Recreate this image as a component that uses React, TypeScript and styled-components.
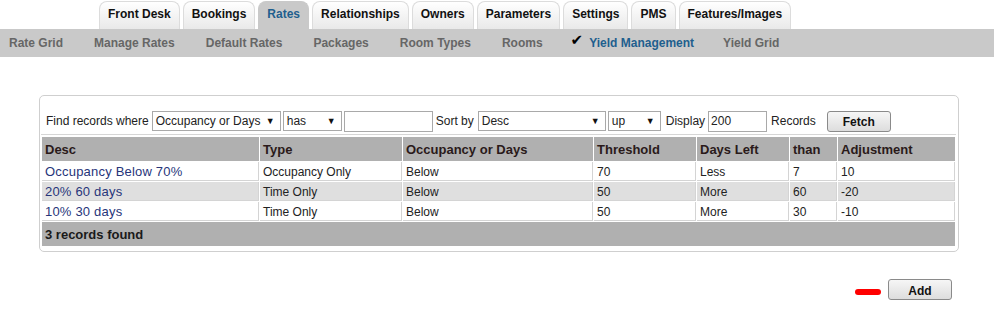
import styled, {createGlobalStyle} from "styled-components";

const GlobalStyle = createGlobalStyle`
    body {
        margin: 0;
        background: #ffffff;
        font-family: "Liberation Sans", Arial, sans-serif;
        color: #222;
    }
`;

type Row = {
    desc: string
    type: string
    occ: string
    threshold: string
    daysLeft: string
    than: string
    adjustment: string
}

const tabs = ["Front Desk", "Bookings", "Rates", "Relationships", "Owners", "Parameters", "Settings", "PMS", "Features/Images"];
const subLinks = ["Rate Grid", "Manage Rates", "Default Rates", "Packages", "Room Types", "Rooms", "Yield Management", "Yield Grid"];

const rows: Row[] = [
    {desc: "Occupancy Below 70%", type: "Occupancy Only", occ: "Below", threshold: "70", daysLeft: "Less", than: "7", adjustment: "10"},
    {desc: "20% 60 days", type: "Time Only", occ: "Below", threshold: "50", daysLeft: "More", than: "60", adjustment: "-20"},
    {desc: "10% 30 days", type: "Time Only", occ: "Below", threshold: "50", daysLeft: "More", than: "30", adjustment: "-10"},
];

const columns = [
    {label: "Desc", width: 217},
    {label: "Type", width: 142},
    {label: "Occupancy or Days", width: 190},
    {label: "Threshold", width: 102},
    {label: "Days Left", width: 92},
    {label: "than", width: 47},
    {label: "Adjustment", width: 117},
];

function App() {
    return (
        <>
            <GlobalStyle/>
            <TabBar>
                {tabs.map(t => (
                    <Tab key={t} $active={t === "Rates"}>{t}</Tab>
                ))}
            </TabBar>
            <SubNav>
                {subLinks.map(s => (
                    <SubLink key={s} $active={s === "Yield Management"}>
                        {s === "Yield Management" && <Check>✔</Check>}
                        {s}
                    </SubLink>
                ))}
            </SubNav>

            <Panel>
                <FilterRow>
                    <Label>Find records where</Label>
                    <FakeSelect $width={129}>Occupancy or Days<Arrow>▼</Arrow></FakeSelect>
                    <FakeSelect $width={59}>has<Arrow>▼</Arrow></FakeSelect>
                    <TextBox $width={89}/>
                    <Label $ml={1} $mr={2}>Sort by</Label>
                    <FakeSelect $width={128}>Desc<Arrow>▼</Arrow></FakeSelect>
                    <FakeSelect $width={53}>up<Arrow>▼</Arrow></FakeSelect>
                    <Label $ml={3}>Display</Label>
                    <TextBox $width={59} defaultValue="200"/>
                    <Label $ml={2}>Records</Label>
                    <Button $ml={8}>Fetch</Button>
                </FilterRow>

                <Table>
                    <colgroup>
                        {columns.map(c => <col key={c.label} style={{width: c.width}}/>)}
                    </colgroup>
                    <thead>
                    <tr>
                        {columns.map(c => <Th key={c.label}>{c.label}</Th>)}
                    </tr>
                    </thead>
                    <tbody>
                    {rows.map((r, i) => (
                        <Tr key={r.desc} $alt={i % 2 === 1}>
                            <DescTd>{r.desc}</DescTd>
                            <Td>{r.type}</Td>
                            <Td>{r.occ}</Td>
                            <Td>{r.threshold}</Td>
                            <Td>{r.daysLeft}</Td>
                            <Td>{r.than}</Td>
                            <Td>{r.adjustment}</Td>
                        </Tr>
                    ))}
                    <tr>
                        <Footer colSpan={7}>3 records found</Footer>
                    </tr>
                    </tbody>
                </Table>
            </Panel>

            <Actions>
                <Marker/>
                <Button>Add</Button>
            </Actions>
        </>
    );
}

export default App;

const TabBar = styled.div`
    display: flex;
    align-items: flex-end;
    gap: 3px;
    height: 29px;
    padding-left: 99px;
`;

const Tab = styled.div<{ $active?: boolean }>`
    height: 28px;
    line-height: 24px;
    padding: 0 8px;
    box-sizing: border-box;
    font-size: 12px;
    font-weight: bold;
    color: ${p => p.$active ? "#1f5f8e" : "#111"};
    border: 1px solid ${p => p.$active ? "#c9c9c9" : "#dcdcdc"};
    border-bottom: none;
    border-radius: 8px 8px 0 0;
    background: ${p => p.$active ? "#c9c9c9" : "linear-gradient(#ffffff, #e9e9e9)"};
`;

const SubNav = styled.div`
    display: flex;
    align-items: center;
    gap: 31px;
    height: 28px;
    padding-left: 9px;
    background: #c9c9c9;
`;

const SubLink = styled.div<{ $active?: boolean }>`
    font-size: 12px;
    font-weight: bold;
    color: ${p => p.$active ? "#1f5f8e" : "#666"};
    display: flex;
    align-items: center;
    margin-left: ${p => p.$active ? -3 : 0}px;
    margin-right: ${p => p.$active ? -2 : 0}px;
`;

const Check = styled.span`
    color: #000;
    font-size: 15px;
    margin-right: 6px;
    margin-top: -6px;
    font-family: "DejaVu Sans", sans-serif;
`;

const Panel = styled.div`
    margin: 38px 35px 0 39px;
    border: 1px solid #cfcfcf;
    border-radius: 5px;
    padding: 14px 2px 4px 1px;
`;

const FilterRow = styled.div`
    display: flex;
    align-items: center;
    gap: 2px;
    height: 22px;
    padding-left: 5px;
    font-size: 12px;
    border-bottom: 1px solid #d6d6d6;
    padding-bottom: 2px;
`;

const Label = styled.span<{ $ml?: number, $mr?: number }>`
    color: #222;
    margin-left: ${p => p.$ml ?? 0}px;
    margin-right: ${p => p.$mr ?? 1}px;
`;

const FakeSelect = styled.div<{ $width: number }>`
    position: relative;
    width: ${p => p.$width}px;
    height: 20px;
    box-sizing: border-box;
    border: 1px solid #a9a9a9;
    background: #fff;
    padding-left: 3px;
    line-height: 18px;
    font-size: 12px;
    color: #222;
`;

const Arrow = styled.span`
    position: absolute;
    right: 5px;
    top: 0;
    font-size: 9px;
    color: #111;
`;

const TextBox = styled.input<{ $width: number }>`
    width: ${p => p.$width}px;
    height: 21px;
    box-sizing: border-box;
    border: 1px solid #a9a9a9;
    padding: 0 2px;
    font-family: "Liberation Sans", Arial, sans-serif;
    font-size: 12px;
    color: #222;
    outline: none;
`;

const Button = styled.button<{ $ml?: number }>`
    margin-left: ${p => p.$ml ?? 0}px;
    width: 64px;
    height: 21px;
    padding: 2px 0 0;
    border: 1px solid #8a8a8a;
    border-radius: 3px;
    background: linear-gradient(#f6f6f6, #dddddd);
    font-family: "Liberation Sans", Arial, sans-serif;
    font-size: 12px;
    font-weight: bold;
    color: #111;
`;

const Table = styled.table`
    width: 915px;
    margin-top: 1px;
    border-collapse: separate;
    border-spacing: 1px;
    table-layout: fixed;
`;

const Th = styled.th`
    height: 24px;
    padding: 0 3px;
    text-align: left;
    background: #b0b0b0;
    font-size: 13px;
    font-weight: bold;
    color: #2a1a1a;
`;

const Tr = styled.tr<{ $alt?: boolean }>`
    background: ${p => p.$alt ? "#dfdfdf" : "#ffffff"};
`;

const Td = styled.td`
    height: 17px;
    padding: 1px 3px 0;
    font-size: 12px;
    color: #222;
    border-right: 1px solid #d4d4d4;
    border-bottom: 1px solid #d4d4d4;
    white-space: nowrap;
`;

const DescTd = styled(Td)`
    font-size: 13px;
    color: #27357a;
    letter-spacing: 0.2px;
`;

const Footer = styled.td`
    height: 24px;
    padding: 0 3px;
    background: #b0b0b0;
    font-size: 13px;
    font-weight: bold;
    color: #1a1a1a;
`;

const Actions = styled.div`
    display: flex;
    justify-content: flex-end;
    align-items: center;
    gap: 7px;
    margin-top: 27px;
    padding-right: 42px;
`;

const Marker = styled.div`
    width: 26px;
    height: 6px;
    border-radius: 3px;
    background: #ff0000;
    margin-top: 4px;
`;
